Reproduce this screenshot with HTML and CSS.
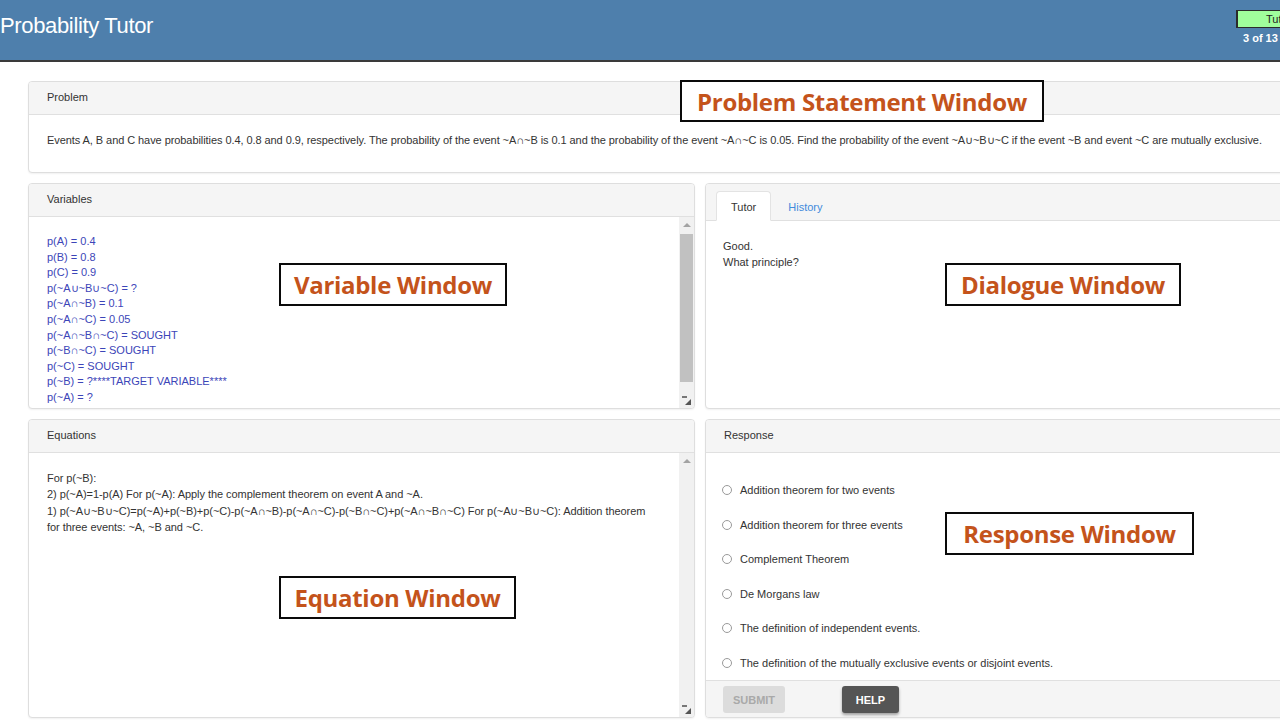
FILE: index.html
```html
<!DOCTYPE html>
<html>
<head>
    <meta charset="UTF-8">
    <title>Probability Tutor</title>
    <link rel="stylesheet" href="styles.css">
</head>
<body>
    <!-- 頂部標題列 -->
    <header class="topbar">
        <div class="brand">Probability Tutor</div>
        <div class="status">
            <div class="mode-box">Tutor</div>
            <div class="progress">3 of 13</div>
        </div>
    </header>

    <main class="page">
        <!-- 題目 -->
        <section class="panel problem-panel">
            <div class="panel-heading">Problem</div>
            <div class="problem-body">Events A, B and C have probabilities 0.4, 0.8 and 0.9, respectively. The probability of the event ~A∩~B is 0.1 and the probability of the event ~A∩~C is 0.05. Find the probability of the event ~A∪~B∪~C if the event ~B and event ~C are mutually exclusive.</div>
        </section>

        <div class="row row-top">
            <!-- 變數 -->
            <section class="panel">
                <div class="panel-heading">Variables</div>
                <div class="scroll-wrap">
                    <div class="scroll-content var-box">
                        <div>p(A) = 0.4</div>
                        <div>p(B) = 0.8</div>
                        <div>p(C) = 0.9</div>
                        <div>p(~A∪~B∪~C) = ?</div>
                        <div>p(~A∩~B) = 0.1</div>
                        <div>p(~A∩~C) = 0.05</div>
                        <div>p(~A∩~B∩~C) = SOUGHT</div>
                        <div>p(~B∩~C) = SOUGHT</div>
                        <div>p(~C) = SOUGHT</div>
                        <div>p(~B) = ?****TARGET VARIABLE****</div>
                        <div>p(~A) = ?</div>
                    </div>
                    <div class="scrollbar">
                        <span class="sb-arrow"></span>
                        <span class="sb-thumb"></span>
                        <span class="sb-track"></span>
                        <span class="sb-resizer">
                            <svg width="9" height="9" viewBox="0 0 9 9"><path d="M0 0h5v2H0z" fill="#777"/><path d="M9 3v6H3z" fill="#555"/></svg>
                        </span>
                    </div>
                </div>
            </section>

            <!-- 對話 -->
            <section class="panel">
                <div class="tab-bar">
                    <div class="tab active">Tutor</div>
                    <div class="tab">History</div>
                </div>
                <div class="dialogue-body">
                    <div>Good.</div>
                    <div>What principle?</div>
                </div>
            </section>
        </div>

        <div class="row row-bottom">
            <!-- 方程式 -->
            <section class="panel">
                <div class="panel-heading">Equations</div>
                <div class="scroll-wrap">
                    <div class="scroll-content eq-box">
                        <div>For p(~B):</div>
                        <div>2) p(~A)=1-p(A) For p(~A): Apply the complement theorem on event A and ~A.</div>
                        <div>1) p(~A∪~B∪~C)=p(~A)+p(~B)+p(~C)-p(~A∩~B)-p(~A∩~C)-p(~B∩~C)+p(~A∩~B∩~C) For p(~A∪~B∪~C): Addition theorem for three events: ~A, ~B and ~C.</div>
                    </div>
                    <div class="scrollbar">
                        <span class="sb-arrow"></span>
                        <span class="sb-track"></span>
                        <span class="sb-resizer">
                            <svg width="9" height="9" viewBox="0 0 9 9"><path d="M0 0h5v2H0z" fill="#777"/><path d="M9 3v6H3z" fill="#555"/></svg>
                        </span>
                    </div>
                </div>
            </section>

            <!-- 回答 -->
            <section class="panel response-panel">
                <div class="panel-heading">Response</div>
                <div class="options">
                    <label class="option"><input type="radio" name="principle"> Addition theorem for two events</label>
                    <label class="option"><input type="radio" name="principle"> Addition theorem for three events</label>
                    <label class="option"><input type="radio" name="principle"> Complement Theorem</label>
                    <label class="option"><input type="radio" name="principle"> De Morgans law</label>
                    <label class="option"><input type="radio" name="principle"> The definition of independent events.</label>
                    <label class="option"><input type="radio" name="principle"> The definition of the mutually exclusive events or disjoint events.</label>
                </div>
                <div class="panel-footer">
                    <button class="btn btn-submit" disabled>SUBMIT</button>
                    <button class="btn btn-help">HELP</button>
                </div>
            </section>
        </div>
    </main>

    <!-- 說明標籤 -->
    <div class="callout callout-problem">Problem Statement Window</div>
    <div class="callout callout-variable">Variable Window</div>
    <div class="callout callout-dialogue">Dialogue Window</div>
    <div class="callout callout-response">Response Window</div>
    <div class="callout callout-equation">Equation Window</div>
</body>
</html>
```

FILE: styles.css
```css
* {
    margin: 0;
    padding: 0;
    box-sizing: border-box;
}

html {
    overflow: hidden;
}

body {
    position: relative;
    width: 1400px;
    height: 720px;
    overflow: hidden;
    font-family: "Liberation Sans", Arial, sans-serif;
    font-size: 11px;
    color: #333;
    background: #fff;
}

/* 頂部標題列 */
.topbar {
    display: flex;
    align-items: flex-start;
    height: 62px;
    padding-right: 78px;
    background: #4e7fac;
    border-bottom: 2px solid #3a3a3a;
    color: #fff;
}

.brand {
    flex: 1;
    margin-top: 13px;
    font-size: 22px;
    line-height: 26px;
    letter-spacing: -0.35px;
}

.status {
    width: 86px;
    margin-top: 10px;
}

.mode-box {
    height: 18px;
    padding-left: 28px;
    background: #a0fe9c;
    border: 1px solid #2b2b2b;
    border-left-width: 2px;
    color: #222;
    font-size: 11px;
    line-height: 16px;
}

.progress {
    margin-top: 3px;
    padding-left: 7px;
    font-size: 11px;
    font-weight: bold;
    line-height: 14px;
}

/* 版面 */
.page {
    padding: 19px 28px 0;
    display: flex;
    flex-direction: column;
    gap: 10px;
}

.row {
    display: grid;
    grid-template-columns: 1fr 1fr;
    gap: 10px;
}

.row-top {
    height: 226px;
}

.row-bottom {
    height: 299px;
}

.panel {
    display: flex;
    flex-direction: column;
    background: #fff;
    border: 1px solid #dedede;
    border-radius: 4px;
    box-shadow: 0 1px 2px rgba(0, 0, 0, 0.06);
    overflow: hidden;
}

.panel-heading {
    flex: none;
    height: 33px;
    padding: 0 18px;
    line-height: 31px;
    background: #f5f5f5;
    border-bottom: 1px solid #e0e0e0;
}

.problem-body {
    padding: 17px 18px 24px;
    line-height: 16px;
    letter-spacing: -0.07px;
}

/* 可捲動區域 */
.scroll-wrap {
    flex: 1;
    display: flex;
    min-height: 0;
}

.scroll-content {
    flex: 1;
    overflow: hidden;
}

.var-box {
    padding: 17px 18px 0;
    line-height: 15.6px;
    color: #3c45b8;
}

.eq-box {
    padding: 17px 30px 0 18px;
    line-height: 16.3px;
    letter-spacing: -0.06px;
}

.scrollbar {
    flex: none;
    display: flex;
    flex-direction: column;
    width: 15px;
    background: #f1f1f1;
}

.sb-arrow {
    flex: none;
    display: flex;
    align-items: center;
    justify-content: center;
    height: 16px;
}

.sb-arrow::before {
    content: "";
    border-left: 4px solid transparent;
    border-right: 4px solid transparent;
    border-bottom: 4px solid #a3a3a3;
}

.sb-thumb {
    flex: none;
    height: 148px;
    margin: 1px 1px 0;
    background: #c1c1c1;
}

.sb-track {
    flex: 1;
}

.sb-resizer {
    flex: none;
    display: flex;
    align-items: center;
    justify-content: center;
    height: 15px;
}

/* 對話分頁 */
.tab-bar {
    flex: none;
    display: flex;
    height: 37px;
    padding: 7px 10px 0;
    background: #f5f5f5;
    border-bottom: 1px solid #e0e0e0;
}

.tab {
    height: 30px;
    margin-right: 2px;
    padding: 0 14px;
    line-height: 30px;
    color: #428bdc;
    border: 1px solid transparent;
    border-radius: 4px 4px 0 0;
}

.tab.active {
    background: #fff;
    color: #333;
    border-color: #e3e3e3;
    border-bottom-color: #fff;
}

.dialogue-body {
    padding: 17px 17px;
    line-height: 16px;
}

/* 回答選項 */
.response-panel .options {
    flex: 1;
    padding: 20px 16px 0;
}

.option {
    display: flex;
    align-items: center;
    gap: 8px;
    height: 34.5px;
}

.option input {
    appearance: none;
    width: 10px;
    height: 10px;
    border: 1px solid #9a9a9a;
    border-radius: 50%;
    background: #fff;
}

.panel-footer {
    flex: none;
    display: flex;
    gap: 57px;
    height: 37px;
    padding: 5px 17px 0;
    background: #f5f5f5;
    border-top: 1px solid #e0e0e0;
}

.btn {
    height: 27px;
    border: none;
    border-radius: 3px;
    font-family: "Liberation Sans", Arial, sans-serif;
    font-size: 11px;
    font-weight: bold;
}

.btn-submit {
    width: 62px;
    background: #dcdcdc;
    color: #a9a9a9;
}

.btn-help {
    width: 57px;
    background: #555;
    color: #fff;
    box-shadow: 0 2px 3px rgba(0, 0, 0, 0.35);
}

/* 說明標籤 */
.callout {
    position: absolute;
    display: flex;
    align-items: center;
    justify-content: center;
    height: 43px;
    background: #fff;
    border: 2px solid #0a0a0a;
    color: #c4531b;
    font-family: "Open Sans", sans-serif;
    font-size: 24px;
    font-weight: bold;
    letter-spacing: -0.3px;
    white-space: nowrap;
}

.callout-problem {
    left: 680px;
    top: 80px;
    width: 364px;
    height: 42px;
}

.callout-variable {
    left: 279px;
    top: 263px;
    width: 228px;
}

.callout-dialogue {
    left: 945px;
    top: 263px;
    width: 236px;
}

.callout-response {
    left: 945px;
    top: 512px;
    width: 249px;
}

.callout-equation {
    left: 279px;
    top: 576px;
    width: 237px;
}
```
